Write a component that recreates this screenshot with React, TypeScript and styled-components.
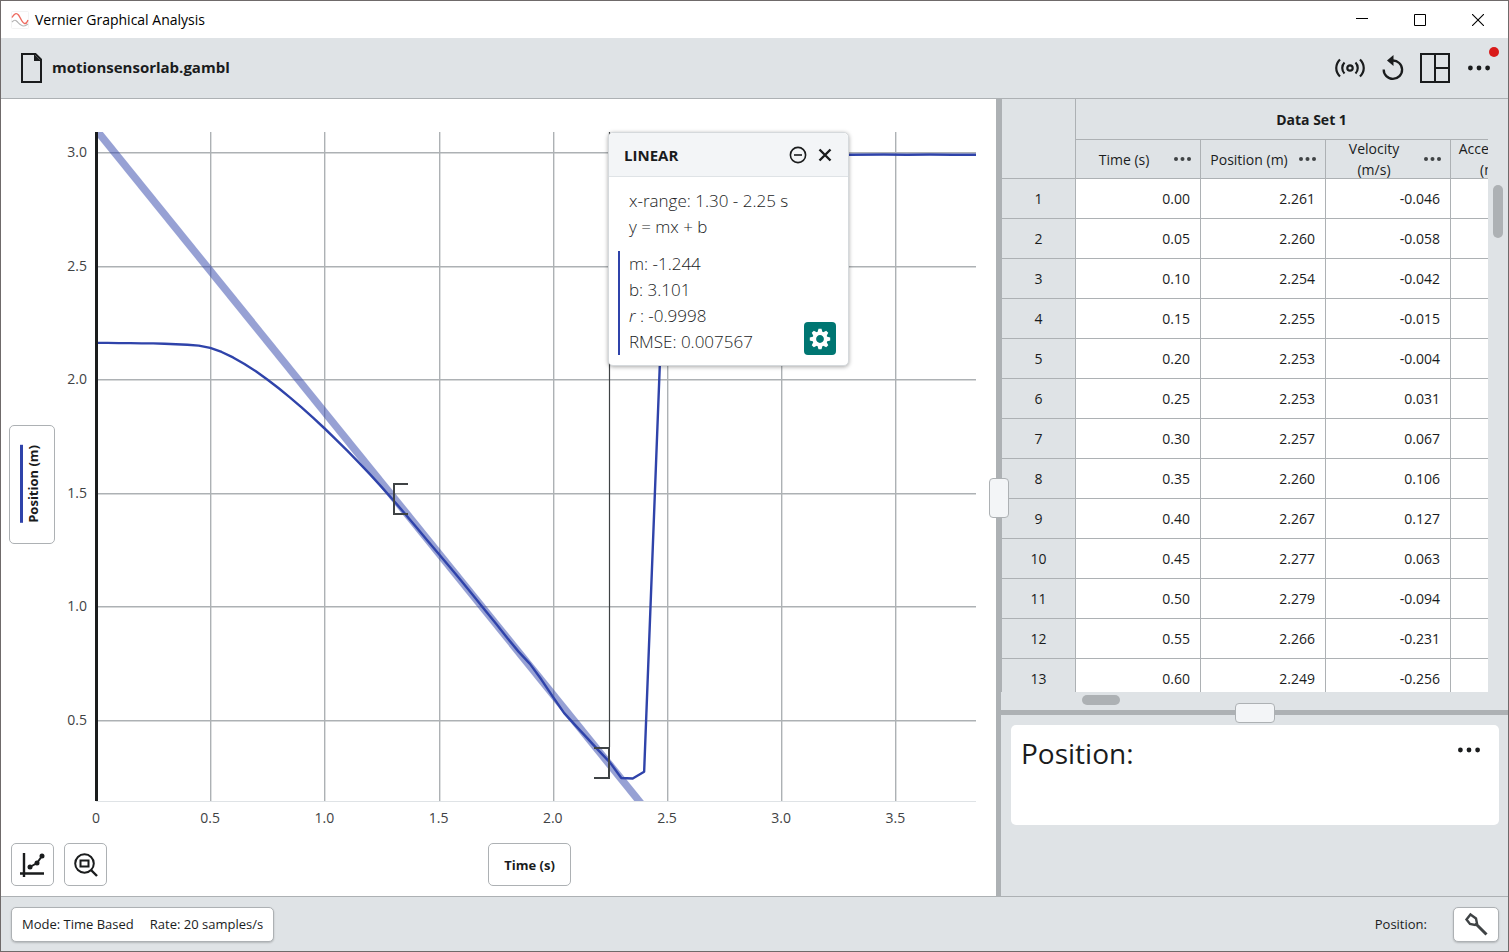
import React, { useLayoutEffect, useRef, useState } from "react";
import styled, { createGlobalStyle, css } from "styled-components";

const c = {
  bar: "#dfe3e6",
  line: "#adb1b4",
  text: "#1a1c1d",
  soft: "#3f4345",
  blue: "#2f43aa",
  teal: "#007672",
  pale: "#f3f5f7",
};

const GlobalStyle = createGlobalStyle`
  *, *::before, *::after { box-sizing: border-box; }
  body { margin: 0; background: #fff; }
  body, button { font-family: "Open Sans", "Noto Sans", sans-serif; font-size: 14px; color: ${c.text}; }
  button { margin: 0; padding: 0; border: 0; background: none; cursor: pointer; }
  svg { display: block; flex: none; }
`;

const Window = styled.div`
  display: flex;
  flex-direction: column;
  min-height: 100vh;
  border: 1px solid #6f6a6a;
`;

const TitleBar = styled.header`
  display: flex;
  align-items: center;
  height: 37px;
  padding: 0 1px 0 10px;
  color: #000;
`;

const AppName = styled.span`
  flex: 1;
  padding-left: 6px;
`;

const WindowButton = styled.button`
  display: grid;
  place-items: center;
  width: 58px;
  height: 37px;
`;

const Toolbar = styled.div`
  display: flex;
  align-items: center;
  height: 61px;
  padding: 0 18px 0 19px;
  background: ${c.bar};
  border-bottom: 1px solid ${c.line};
`;

const FileButton = styled.button`
  display: flex;
  align-items: center;
  gap: 9px;
  margin-right: auto;
  font-size: 15px;
  line-height: 28px;
  font-weight: 700;
`;

const FileName = styled.span`
  padding-bottom: 2px;
`;

const Tools = styled.div`
  display: flex;
  align-items: center;
  gap: 16px;
`;

const ToolButton = styled.button`
  position: relative;
  display: grid;
  place-items: center;
`;

const MoreButton = styled(ToolButton)`
  margin-left: 2px;
`;

const AlertDot = styled.span`
  position: absolute;
  top: -18px;
  right: -9px;
  width: 10px;
  height: 10px;
  border-radius: 50%;
  background: #d91a1a;
`;

const Main = styled.main`
  display: flex;
  flex: 1;
`;

const GraphPanel = styled.section`
  flex: 1;
  min-width: 0;
  display: flex;
  flex-direction: column;
  background: #fff;
`;

const GraphRow = styled.div`
  flex: 1;
  display: flex;
  align-items: center;
  padding: 33px 20px 0 8px;
`;

const buttonFrame = css`
  background: #fff;
  border: 1px solid ${c.line};
  border-radius: 5px;
`;

const YAxisButton = styled.button`
  ${buttonFrame}
  display: flex;
  align-items: center;
  width: 46px;
  height: 119px;
  margin-top: 35px;
  padding-left: 10px;
  font-size: 13px;
  font-weight: 700;
`;

const YAxisLabel = styled.span`
  writing-mode: vertical-rl;
  transform: rotate(180deg);
  padding-right: 3px;
  border-right: 3px solid ${c.blue};
  line-height: 14px;
`;

const PlotArea = styled.div`
  position: relative;
  flex: 1;
  align-self: stretch;
  margin-left: 41px;
`;

const PlotSvg = styled.svg`
  position: absolute;
  inset: 0;
  width: 100%;
  height: 100%;
  overflow: visible;

  text { font-size: 14px; fill: ${c.soft}; }
`;

const GraphFooter = styled.div`
  display: grid;
  grid-template-columns: 1fr auto 1fr;
  align-items: end;
  height: 95px;
  padding: 0 20px 10px 10px;
`;

const GraphTools = styled.div`
  display: flex;
  gap: 10px;
`;

const SquareButton = styled.button`
  ${buttonFrame}
  display: grid;
  place-items: center;
  width: 43px;
  height: 43px;
`;

const XAxisButton = styled.button`
  ${buttonFrame}
  width: 83px;
  height: 43px;
  margin-left: 72px;
  font-size: 13px;
  font-weight: 700;
`;

const FitCard = styled.aside`
  position: absolute;
  top: 0;
  width: 241px;
  background: #fff;
  border: 1px solid #d5d9dc;
  border-radius: 5px;
  box-shadow: 0 1px 4px rgba(0, 0, 0, 0.35);
`;

const FitHeader = styled.div`
  display: flex;
  align-items: center;
  gap: 9px;
  height: 44px;
  padding: 0 14px 0 15px;
  background: ${c.pale};
  border-bottom: 1px solid #dfe3e6;
  border-radius: 5px 5px 0 0;
`;

const FitTitle = styled.h2`
  flex: 1;
  margin: 0;
  font-size: 15px;
  font-weight: 700;
`;

const FitBody = styled.div`
  padding: 11px 12px 10px 9px;
  font-size: 17px;
  line-height: 26px;
  font-weight: 300;
  color: ${c.text};
`;

const FitLine = styled.div`
  padding-left: 11px;
`;

const FitResults = styled.div`
  display: flex;
  align-items: flex-end;
  justify-content: space-between;
  margin-top: 11px;
  padding-left: 9px;
  border-left: 2px solid ${c.blue};
`;

const SettingsButton = styled.button`
  display: grid;
  place-items: center;
  width: 32px;
  height: 33px;
  border-radius: 4px;
  background: ${c.teal};
`;

const Splitter = styled.div<{ $vertical?: boolean }>`
  display: flex;
  align-items: center;
  justify-content: center;
  flex: none;
  background: ${c.line};
  ${(p) => (p.$vertical ? "width: 5px;" : "height: 5px;")}
`;

const SplitHandle = styled.button<{ $vertical?: boolean }>`
  position: relative;
  z-index: 1;
  flex: none;
  width: ${(p) => (p.$vertical ? 20 : 40)}px;
  height: ${(p) => (p.$vertical ? 40 : 20)}px;
  background: ${c.pale};
  border: 1px solid ${c.line};
  border-radius: 4px;
`;

const SidePanel = styled.section`
  display: flex;
  flex-direction: column;
  width: 507px;
  background: ${c.bar};
`;

const TablePane = styled.div`
  display: grid;
  grid-template-columns: 1fr 20px;
  grid-template-rows: 593px 18px;
`;

const TableClip = styled.div`
  overflow: hidden;
`;

const DataTable = styled.table`
  width: 575px;
  table-layout: fixed;
  border-collapse: separate;
  border-spacing: 0;

  th, td {
    padding: 0;
    border-right: 1px solid ${c.line};
    border-bottom: 1px solid ${c.line};
    font-weight: 400;
  }
`;

const RowHead = styled.th`
  height: 40px;
  border-left: 1px solid ${c.line};
  text-align: center;
`;

const SetHead = styled.th`
  && {
    height: 41px;
    padding-right: 28px;
    font-weight: 700;
  }
`;

const ColumnHead = styled.th`
  height: 39px;
`;

const ColumnHeadInner = styled.div`
  display: flex;
  align-items: center;
  height: 38px;
  line-height: 21px;
`;

const ColumnName = styled.span`
  flex: none;
  width: 98px;
  padding: 0 8px 0 6px;
  text-align: center;
`;

const Cell = styled.td`
  && { padding-right: 10px; }
  background: #fff;
  text-align: right;
`;

const Track = styled.div<{ $vertical?: boolean }>`
  padding: ${(p) => (p.$vertical ? "86px 0 0 5px" : "3px 0 0 81px")};
`;

const Thumb = styled.div<{ $vertical?: boolean }>`
  width: ${(p) => (p.$vertical ? 10 : 38)}px;
  height: ${(p) => (p.$vertical ? 53 : 10)}px;
  border-radius: 5px;
  background: ${c.line};
`;

const MeterCard = styled.div`
  display: flex;
  justify-content: space-between;
  align-items: flex-start;
  height: 100px;
  margin: 10px 9px 0 10px;
  padding: 10px 19px 0 10px;
  background: #fff;
  border-radius: 5px;
`;

const MeterName = styled.h2`
  margin: 0;
  font-size: 28px;
  line-height: 36px;
  font-weight: 400;
`;

const MeterMenu = styled.button`
  display: grid;
  place-items: center;
  height: 30px;
`;

const StatusBar = styled.footer`
  display: flex;
  align-items: center;
  justify-content: space-between;
  height: 55px;
  padding: 0 9px 0 10px;
  background: ${c.bar};
  border-top: 1px solid ${c.line};
`;

const StatusButton = styled.button`
  ${buttonFrame}
  display: flex;
  align-items: center;
  justify-content: center;
  gap: 16px;
  height: 35px;
  padding: 0 10px;
  font-size: 13px;
  line-height: 18px;
  box-shadow: 0 1px 2px rgba(0, 0, 0, 0.2);
`;

const StatusMeter = styled.div`
  display: flex;
  align-items: center;
  gap: 26px;
  font-size: 13px;
  line-height: 18px;
`;

function Dots({ size = 22, r = 2.4, color = c.text }: { size?: number; r?: number; color?: string }) {
  return (
    <svg width={size} height="6" viewBox={`0 0 ${size} 6`} fill={color}>
      <circle cx={r} cy="3" r={r} />
      <circle cx={size / 2} cy="3" r={r} />
      <circle cx={size - r} cy="3" r={r} />
    </svg>
  );
}

const X_MAX = 3.853;
const Y_MIN = 0.143;
const Y_MAX = 3.09;

const xTicks = [0, 0.5, 1, 1.5, 2, 2.5, 3, 3.5];
const yTicks = [0.5, 1, 1.5, 2, 2.5, 3];

const samples: [number, number][] = [
  [0, 2.161], [0.05, 2.161], [0.1, 2.16], [0.15, 2.16], [0.2, 2.159], [0.25, 2.159], [0.3, 2.157],
  [0.35, 2.155], [0.4, 2.153], [0.45, 2.149], [0.5, 2.139], [0.55, 2.121], [0.6, 2.097], [0.65, 2.068],
  [0.7, 2.036], [0.75, 2.0], [0.8, 1.961], [0.85, 1.92], [0.9, 1.877], [0.95, 1.832], [1, 1.785],
  [1.05, 1.736], [1.1, 1.686], [1.15, 1.635], [1.2, 1.582], [1.25, 1.527], [1.3, 1.47], [1.35, 1.412],
  [1.4, 1.352], [1.45, 1.292], [1.5, 1.232], [1.55, 1.173], [1.6, 1.112], [1.65, 1.05], [1.7, 0.988],
  [1.75, 0.926], [1.8, 0.862], [1.85, 0.801], [1.9, 0.747], [1.95, 0.678], [2, 0.603], [2.05, 0.53],
  [2.1, 0.475], [2.15, 0.421], [2.2, 0.366], [2.25, 0.313], [2.3, 0.244], [2.35, 0.242], [2.4, 0.272],
  [2.47, 2.1], [2.5, 2.985], [3.3, 2.99], [3.45, 2.991], [3.55, 2.99], [3.65, 2.991], [3.75, 2.99], [3.853, 2.99],
];

function Plot() {
  const ref = useRef<HTMLDivElement>(null);
  const [size, setSize] = useState({ w: 880, h: 669 });

  useLayoutEffect(() => {
    const el = ref.current;
    if (!el) return;
    const measure = () => setSize({ w: el.clientWidth, h: el.clientHeight });
    measure();
    const observer = new ResizeObserver(measure);
    observer.observe(el);
    return () => observer.disconnect();
  }, []);

  const { w, h } = size;
  const px = (x: number) => (x / X_MAX) * w;
  const py = (y: number) => ((Y_MAX - y) / (Y_MAX - Y_MIN)) * h;
  const crisp = (n: number) => Math.round(n) + 0.7;
  const fit = (x: number) => 3.101 - 1.244 * x;
  const left = Math.round(px(1.3)) + 1;
  const right = Math.round(px(2.25)) - 1;

  return (
    <PlotArea ref={ref}>
      <PlotSvg role="img" aria-label="Position against time">
        <defs>
          <clipPath id="plot-clip">
            <rect x="0" y="0" width={w} height={h} />
          </clipPath>
        </defs>
        <g stroke={c.line} strokeWidth="1.4">
          {xTicks.slice(1).map((t) => (
            <line key={t} x1={crisp(px(t))} x2={crisp(px(t))} y1="0" y2={h} />
          ))}
          {yTicks.map((t) => (
            <line key={t} x1="0" x2={w} y1={crisp(py(t))} y2={crisp(py(t))} />
          ))}
        </g>
        <line x1="0" x2={w} y1={h + 0.5} y2={h + 0.5} stroke="#dfe3e6" />
        <g clipPath="url(#plot-clip)" fill="none" stroke={c.blue}>
          <line x1={px(-0.1)} y1={py(fit(-0.1))} x2={px(2.5)} y2={py(fit(2.5))} strokeWidth="7.5" strokeOpacity="0.5" />
          <polyline
            points={samples.map(([x, y]) => `${px(x)},${py(y)}`).join(" ")}
            strokeWidth="2.4"
            strokeLinejoin="round"
          />
        </g>
        <line x1="0.5" x2="0.5" y1="0" y2={h} stroke={c.text} strokeWidth="3" />
        <line x1={right + 0.5} x2={right + 0.5} y1="0" y2={h - 54} stroke={c.soft} strokeWidth="1.2" />
        <g fill="none" stroke={c.soft} strokeWidth="2">
          <path d={`M${left + 14} ${Math.round(py(1.54))}H${left}v30h14`} />
          <path d={`M${right - 15} ${Math.round(py(0.376))}h15v30h-15`} />
        </g>
        {xTicks.map((t) => (
          <text key={t} x={px(t)} y={h + 22} textAnchor="middle">
            {t === 0 ? "0" : t.toFixed(1)}
          </text>
        ))}
        {yTicks.map((t) => (
          <text key={t} x="-9" y={py(t) + 5} textAnchor="end">
            {t.toFixed(1)}
          </text>
        ))}
      </PlotSvg>
      <FitCard style={{ left: right - 1 }}>
        <FitHeader>
          <FitTitle>LINEAR</FitTitle>
          <ToolButton aria-label="Minimize">
            <svg width="18" height="18" viewBox="0 0 18 18" fill="none" stroke={c.text} strokeWidth="1.6">
              <circle cx="9" cy="9" r="7.6" />
              <path d="M5 9h8" />
            </svg>
          </ToolButton>
          <ToolButton aria-label="Close">
            <svg width="18" height="18" viewBox="0 0 18 18" fill="none" stroke={c.text} strokeWidth="2.4">
              <path d="M3.5 3.5l11 11M14.5 3.5l-11 11" />
            </svg>
          </ToolButton>
        </FitHeader>
        <FitBody>
          <FitLine>x-range: 1.30 - 2.25 s</FitLine>
          <FitLine>y = mx + b</FitLine>
          <FitResults>
            <div>
              <div>m: -1.244</div>
              <div>b: 3.101</div>
              <div><i>r</i> : -0.9998</div>
              <div>RMSE: 0.007567</div>
            </div>
            <SettingsButton aria-label="Fit settings">
              <svg width="22" height="22" viewBox="-11 -11 22 22">
                <circle r="5.7" fill="none" stroke="#fff" strokeWidth="3.6" />
                {[0, 45, 90, 135, 180, 225, 270, 315].map((a) => (
                  <path key={a} transform={`rotate(${a})`} d="M-2.6-6.5L-1.5-10.200H1.500L2.600-6.500Z" fill="#fff" />
                ))}
              </svg>
            </SettingsButton>
          </FitResults>
        </FitBody>
      </FitCard>
    </PlotArea>
  );
}

const columns = ["Time (s)", "Position (m)", "Velocity (m/s)", "Acceleration (m/s²)"];

const rows: [string, string, string][] = [
  ["0.00", "2.261", "-0.046"],
  ["0.05", "2.260", "-0.058"],
  ["0.10", "2.254", "-0.042"],
  ["0.15", "2.255", "-0.015"],
  ["0.20", "2.253", "-0.004"],
  ["0.25", "2.253", "0.031"],
  ["0.30", "2.257", "0.067"],
  ["0.35", "2.260", "0.106"],
  ["0.40", "2.267", "0.127"],
  ["0.45", "2.277", "0.063"],
  ["0.50", "2.279", "-0.094"],
  ["0.55", "2.266", "-0.231"],
  ["0.60", "2.249", "-0.256"],
];

export default function App() {
  return (
    <Window>
      <GlobalStyle />
      <TitleBar>
        <svg width="18" height="18" viewBox="0 0 18 18" fill="none">
          <rect x="0.5" y="0.5" width="17" height="17" rx="1" stroke="#f3f3f3" />
          <path d="M1 11C3 9 4 8.500 6 10.500S10 15 12.500 15 15 14 17 13" stroke="#b5b5b5" strokeWidth="1.200" />
          <path d="M1 6.500C3 2.500 5.500 1.500 7.500 4S11 12 13.500 12.500 16 11 17 9" stroke="#ee6a5f" strokeWidth="1.400" />
        </svg>
        <AppName>Vernier Graphical Analysis</AppName>
        <WindowButton aria-label="Minimize window">
          <svg width="12" height="12" viewBox="0 0 12 12" stroke="#000"><path d="M0 4.500h12" /></svg>
        </WindowButton>
        <WindowButton aria-label="Maximize window">
          <svg width="12" height="12" viewBox="0 0 12 12" fill="none" stroke="#000"><path d="M.5.5h11v11H.5z" /></svg>
        </WindowButton>
        <WindowButton aria-label="Close window">
          <svg width="12" height="12" viewBox="0 0 12 12" stroke="#000" strokeWidth="1.100"><path d="M0 0l12 12M12 0L0 12" /></svg>
        </WindowButton>
      </TitleBar>

      <Toolbar>
        <FileButton>
          <svg width="23" height="30" viewBox="0 0 23 30">
            <path d="M2 1h13.500L21 6.500V29H2z" fill="none" stroke={c.text} strokeWidth="2" />
            <path d="M14 1v7h7z" fill={c.text} />
          </svg>
          <FileName>motionsensorlab.gambl</FileName>
        </FileButton>
        <Tools>
          <ToolButton aria-label="Sensors">
            <svg width="32" height="20" viewBox="0 0 32 20" fill="none" stroke={c.text} strokeWidth="2.200">
              <circle cx="16" cy="10" r="2.700" />
              <path d="M10.500 4.500c-3 3-3 8 0 11M21.500 4.500c3 3 3 8 0 11M6 1.500c-5 5-5 12 0 17M26 1.500c5 5 5 12 0 17" />
            </svg>
          </ToolButton>
          <ToolButton aria-label="Undo">
            <svg width="22" height="26" viewBox="0 0 22 26">
              <path d="M1.700 14.500A9.200 9.200 0 1 0 10.500 5.500" fill="none" stroke={c.text} strokeWidth="2.300" />
              <path d="M5 5.500L11.500 0v11z" fill={c.text} />
            </svg>
          </ToolButton>
          <ToolButton aria-label="View layout">
            <svg width="30" height="30" viewBox="0 0 30 30" fill="none" stroke={c.text} strokeWidth="2">
              <path d="M1 1h28v28H1zM15 1v28M15 15h14" />
            </svg>
          </ToolButton>
          <MoreButton aria-label="More options">
            <Dots />
            <AlertDot />
          </MoreButton>
        </Tools>
      </Toolbar>

      <Main>
        <GraphPanel>
          <GraphRow>
            <YAxisButton>
              <YAxisLabel>Position (m)</YAxisLabel>
            </YAxisButton>
            <Plot />
          </GraphRow>
          <GraphFooter>
            <GraphTools>
              <SquareButton aria-label="Graph tools">
                <svg width="26" height="26" viewBox="0 0 26 26" fill="none" stroke={c.text} strokeWidth="2.400">
                  <path d="M4 1v24M0 21.500h24" />
                  <path d="M10 15l7-4 5-7" strokeWidth="2" />
                  <g fill={c.text} stroke="none">
                    <circle cx="10" cy="15" r="2.500" />
                    <circle cx="17" cy="11" r="2.500" />
                    <circle cx="22" cy="4" r="2.500" />
                  </g>
                </svg>
              </SquareButton>
              <SquareButton aria-label="Zoom to fit">
                <svg width="26" height="26" viewBox="0 0 26 26" fill="none" stroke={c.text} strokeWidth="2">
                  <circle cx="11.500" cy="11.500" r="9.300" />
                  <path d="M7.500 8.500h8v6h-8z" />
                  <path d="M18 18l6 6" strokeWidth="2.400" />
                </svg>
              </SquareButton>
            </GraphTools>
            <XAxisButton>Time (s)</XAxisButton>
          </GraphFooter>
        </GraphPanel>

        <Splitter $vertical>
          <SplitHandle $vertical aria-label="Resize graph" />
        </Splitter>

        <SidePanel>
          <TablePane>
            <TableClip>
              <DataTable>
                <colgroup>
                  <col width="75" />
                  {columns.map((name) => (
                    <col key={name} width="125" />
                  ))}
                </colgroup>
                <thead>
                  <tr>
                    <RowHead as="td" rowSpan={2} />
                    <SetHead colSpan={4}>Data Set 1</SetHead>
                  </tr>
                  <tr>
                    {columns.map((name) => (
                      <ColumnHead key={name}>
                        <ColumnHeadInner>
                          <ColumnName>{name}</ColumnName>
                          <ToolButton aria-label={`${name} options`}>
                            <Dots size={17} r={2} color={c.soft} />
                          </ToolButton>
                        </ColumnHeadInner>
                      </ColumnHead>
                    ))}
                  </tr>
                </thead>
                <tbody>
                  {rows.map((row, i) => (
                    <tr key={row[0]}>
                      <RowHead>{i + 1}</RowHead>
                      {row.map((value, j) => (
                        <Cell key={j}>{value}</Cell>
                      ))}
                      <Cell />
                    </tr>
                  ))}
                </tbody>
              </DataTable>
            </TableClip>
            <Track $vertical>
              <Thumb $vertical />
            </Track>
            <Track>
              <Thumb />
            </Track>
          </TablePane>
          <Splitter>
            <SplitHandle aria-label="Resize table" />
          </Splitter>
          <MeterCard>
            <MeterName>Position:</MeterName>
            <MeterMenu aria-label="Meter options">
              <Dots />
            </MeterMenu>
          </MeterCard>
        </SidePanel>
      </Main>

      <StatusBar>
        <StatusButton>
          <span>Mode: Time Based</span>
          <span>Rate: 20 samples/s</span>
        </StatusButton>
        <StatusMeter>
          <span>Position:</span>
          <StatusButton aria-label="Sensor setup">
            <svg width="24" height="24" viewBox="0 0 24 24" fill="none" stroke={c.soft}>
              <path d="M6.500 2.500L12 6.500 13 11.500 11 13 6 12 2.500 7.500z" strokeWidth="2.400" />
              <path d="M11.500 11.500l11 11" strokeWidth="3" />
            </svg>
          </StatusButton>
        </StatusMeter>
      </StatusBar>
    </Window>
  );
}
